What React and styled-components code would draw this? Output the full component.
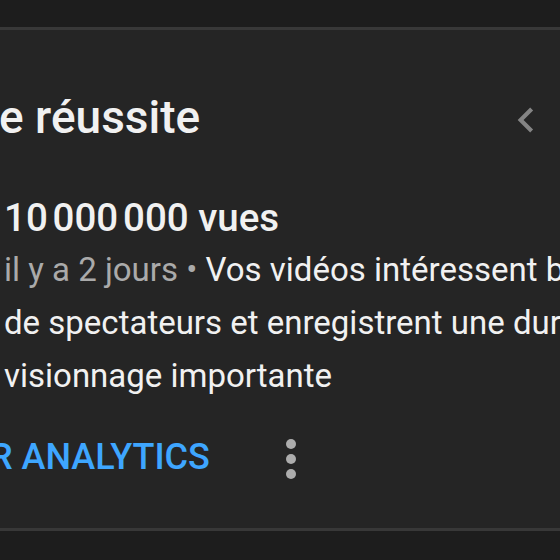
import styled, { createGlobalStyle } from "styled-components";

const Global = createGlobalStyle`
  html, body {
    margin: 0;
    padding: 0;
    background: #1d1d1d;
    overflow: hidden;
  }
  body {
    width: 560px;
    height: 560px;
    font-family: Roboto, "Liberation Sans", Arial, sans-serif;
    -webkit-font-smoothing: antialiased;
  }
`;

const Page = styled.div`
  width: 560px;
  height: 560px;
  overflow: hidden;
  padding-top: 27px;
  box-sizing: border-box;
`;

const Card = styled.section`
  box-sizing: border-box;
  width: 840px;
  margin-left: -40px;
  padding: 61px 0 41px 39px;
  background: #252525;
  border-top: 3px solid #383838;
  border-bottom: 3px solid #383838;
`;

const Header = styled.div`
  width: 602px;
  height: 52px;
  display: flex;
  align-items: flex-start;
  justify-content: space-between;
`;

const Title = styled.h2`
  margin: 0;
  font-size: 46px;
  line-height: 52px;
  font-weight: 500;
  color: #f1f1f1;
  white-space: nowrap;
`;

const Nav = styled.div`
  display: flex;
  padding-top: 4px;
`;

const NavButton = styled.button`
  width: 50px;
  height: 50px;
  padding: 0;
  border: 0;
  background: transparent;
  color: ${(p) => (p.$disabled ? "#848484" : "#f1f1f1")};
  display: flex;
  align-items: center;
  justify-content: center;
  cursor: pointer;
`;

const Milestone = styled.div`
  margin: 52px 0 0 5px;
  display: flex;
  flex-direction: column;
  gap: 2px;
`;

const Count = styled.div`
  font-size: 38.5px;
  line-height: 46px;
  font-weight: 500;
  color: #f1f1f1;
  white-space: nowrap;
`;

const Desc = styled.p`
  margin: 0;
  font-size: 33px;
  line-height: 53px;
  font-weight: 400;
  color: #f1f1f1;
`;

const Line = styled.span`
  display: block;
  white-space: nowrap;
`;

const Meta = styled.span`
  color: #aaaaaa;
`;

const Actions = styled.div`
  margin: 25px 0 0 -9px;
  height: 60px;
  display: flex;
  align-items: center;
  gap: 71px;
`;

const TextButton = styled.button`
  padding: 0;
  border: 0;
  background: transparent;
  font-family: inherit;
  font-size: 36px;
  line-height: 40px;
  font-weight: 500;
  color: #3ea6ff;
  white-space: nowrap;
  cursor: pointer;
`;

const MenuButton = styled.button`
  width: 20px;
  height: 50px;
  padding: 0;
  border: 0;
  background: transparent;
  color: #adadad;
  display: flex;
  cursor: pointer;
`;

function ChevronLeft() {
  return (
    <svg width="50" height="50" viewBox="0 0 24 24" fill="currentColor">
      <path d="M15.41 16.59L10.83 12l4.58-4.59L14 6l-6 6 6 6 1.41-1.41z" />
    </svg>
  );
}

function ChevronRight() {
  return (
    <svg width="50" height="50" viewBox="0 0 24 24" fill="currentColor">
      <path d="M8.59 16.59L13.17 12 8.59 7.41 10 6l6 6-6 6-1.41-1.41z" />
    </svg>
  );
}

function MoreVert() {
  return (
    <svg width="20" height="50" viewBox="0 0 20 50" fill="currentColor">
      <circle cx="10" cy="12" r="5" />
      <circle cx="10" cy="27" r="5" />
      <circle cx="10" cy="42" r="5" />
    </svg>
  );
}

export default function App() {
  return (
    <Page>
      <Global />
      <Card>
        <Header>
          <Title>e réussite</Title>
          <Nav>
            <NavButton $disabled aria-label="Précédent">
              <ChevronLeft />
            </NavButton>
            <NavButton aria-label="Suivant">
              <ChevronRight />
            </NavButton>
          </Nav>
        </Header>
        <Milestone>
          <Count>10{"\u202F"}000{"\u202F"}000 vues</Count>
          <Desc>
            <Line>
              <Meta>il y a 2 jours • </Meta>Vos vidéos intéressent beaucoup
            </Line>
            <Line>de spectateurs et enregistrent une durée de</Line>
            <Line>visionnage importante</Line>
          </Desc>
        </Milestone>
        <Actions>
          <TextButton>R ANALYTICS</TextButton>
          <MenuButton aria-label="Plus d'actions">
            <MoreVert />
          </MenuButton>
        </Actions>
      </Card>
    </Page>
  );
}
